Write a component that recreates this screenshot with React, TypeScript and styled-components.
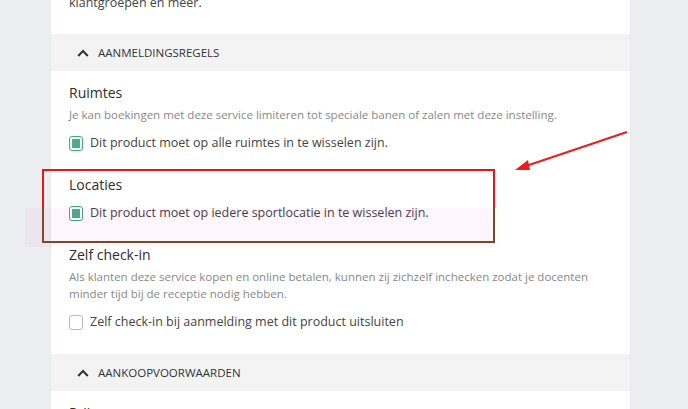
import React from 'react'
import styled, { createGlobalStyle } from 'styled-components'

const GlobalStyle = createGlobalStyle`
    html, body {
        margin: 0;
        padding: 0;
        background: #eceef2;
        font-family: "Open Sans", "Liberation Sans", sans-serif;
        color: #333;
    }
`

type IField = {
    title: string;
    desc?: string;
    label: string;
    checked: boolean;
}

const fields: IField[] = [
    {
        title: 'Ruimtes',
        desc: 'Je kan boekingen met deze service limiteren tot speciale banen of zalen met deze instelling.',
        label: 'Dit product moet op alle ruimtes in te wisselen zijn.',
        checked: true,
    },
    {
        title: 'Locaties',
        label: 'Dit product moet op iedere sportlocatie in te wisselen zijn.',
        checked: true,
    },
    {
        title: 'Zelf check-in',
        desc: 'Als klanten deze service kopen en online betalen, kunnen zij zichzelf inchecken zodat je docenten minder tijd bij de receptie nodig hebben.',
        label: 'Zelf check-in bij aanmelding met dit product uitsluiten',
        checked: false,
    },
]

const Chevron = () => (
    <svg width="12" height="8" viewBox="0 0 12 8" fill="none">
        <path d="M1.2 7 L6 2 L10.8 7" stroke="#333" strokeWidth="2" />
    </svg>
)

const Checkbox = ({ checked }: { checked: boolean }) => (
    <Box $checked={checked}>{checked && <Fill />}</Box>
)

const App = () => {
    return (
        <Page>
            <GlobalStyle />
            <Card>
                <Intro>klantgroepen en meer.</Intro>
                <SectionHeader>
                    <Chevron />
                    <span>Aanmeldingsregels</span>
                </SectionHeader>
                <Body>
                    {fields.map((f) => (
                        <Field key={f.title}>
                            <Title>{f.title}</Title>
                            {f.desc && <Desc>{f.desc}</Desc>}
                            <CheckRow $tight={!f.desc}>
                                <Checkbox checked={f.checked} />
                                <span>{f.label}</span>
                            </CheckRow>
                        </Field>
                    ))}
                </Body>
                <SectionHeader>
                    <Chevron />
                    <span>Aankoopvoorwaarden</span>
                </SectionHeader>
                <Body>
                    <Title>Prijs</Title>
                </Body>
            </Card>
            <Annotation width="688" height="409" viewBox="0 0 688 409">
                <rect x="25" y="208" width="470" height="39" fill="#ff00cc" opacity="0.035" />
                <path d="M43 170 H494 V242 H43 Z" stroke="#e8141a" strokeWidth="2" fill="none" />
                <path d="M43 207 V242 H494 V207" stroke="#7a4a22" strokeWidth="2" fill="none" />
                <line x1="627" y1="132" x2="526" y2="166" stroke="#ee1c1c" strokeWidth="2" />
                <path d="M515 170 L528 160 L530 170 Z" fill="#ee1c1c" />
            </Annotation>
        </Page>
    )
}

export default App

const Page = styled.div`
    position: relative;
    width: 688px;
    height: 409px;
    overflow: hidden;
    padding-left: 51px;
    box-sizing: border-box;
`

const Card = styled.div`
    width: 579px;
    background: #fff;
    margin-top: -6px;
    box-shadow: 0 0 2px rgba(0, 0, 0, 0.08);
`

const Intro = styled.p`
    margin: 0;
    padding: 0 18px 22px;
    font-size: 12.5px;
    line-height: 18px;
    color: #444;
`

const SectionHeader = styled.div`
    display: flex;
    align-items: center;
    gap: 9px;
    height: 37px;
    padding-left: 26px;
    background: #f3f3f3;
    font-size: 11.5px;
    text-transform: uppercase;
    color: #333;
`

const Body = styled.div`
    padding: 12px 18px 22px;
`

const Field = styled.div`
    & + & {
        margin-top: 22px;
    }
`

const Title = styled.div`
    font-size: 14px;
    font-weight: 500;
    line-height: 20px;
    color: #2e2e2e;
`

const Desc = styled.div`
    margin-top: 3px;
    font-size: 11.5px;
    line-height: 17px;
    color: #888;
`

const CheckRow = styled.label<{ $tight?: boolean }>`
    display: flex;
    align-items: center;
    gap: 7px;
    margin-top: ${(p) => (p.$tight ? '8px' : '10px')};
    font-size: 12.5px;
    line-height: 20px;
    color: #444;
`

const Box = styled.span<{ $checked: boolean }>`
    display: flex;
    align-items: center;
    justify-content: center;
    width: 14px;
    height: 15px;
    box-sizing: border-box;
    border: 1.5px solid ${(p) => (p.$checked ? '#3daa7f' : '#b9b9b9')};
    border-radius: 3px;
    background: #fff;
`

const Fill = styled.span`
    width: 8px;
    height: 9px;
    background: #4cae88;
`

const Annotation = styled.svg`
    position: absolute;
    left: 0;
    top: 0;
    pointer-events: none;
`
